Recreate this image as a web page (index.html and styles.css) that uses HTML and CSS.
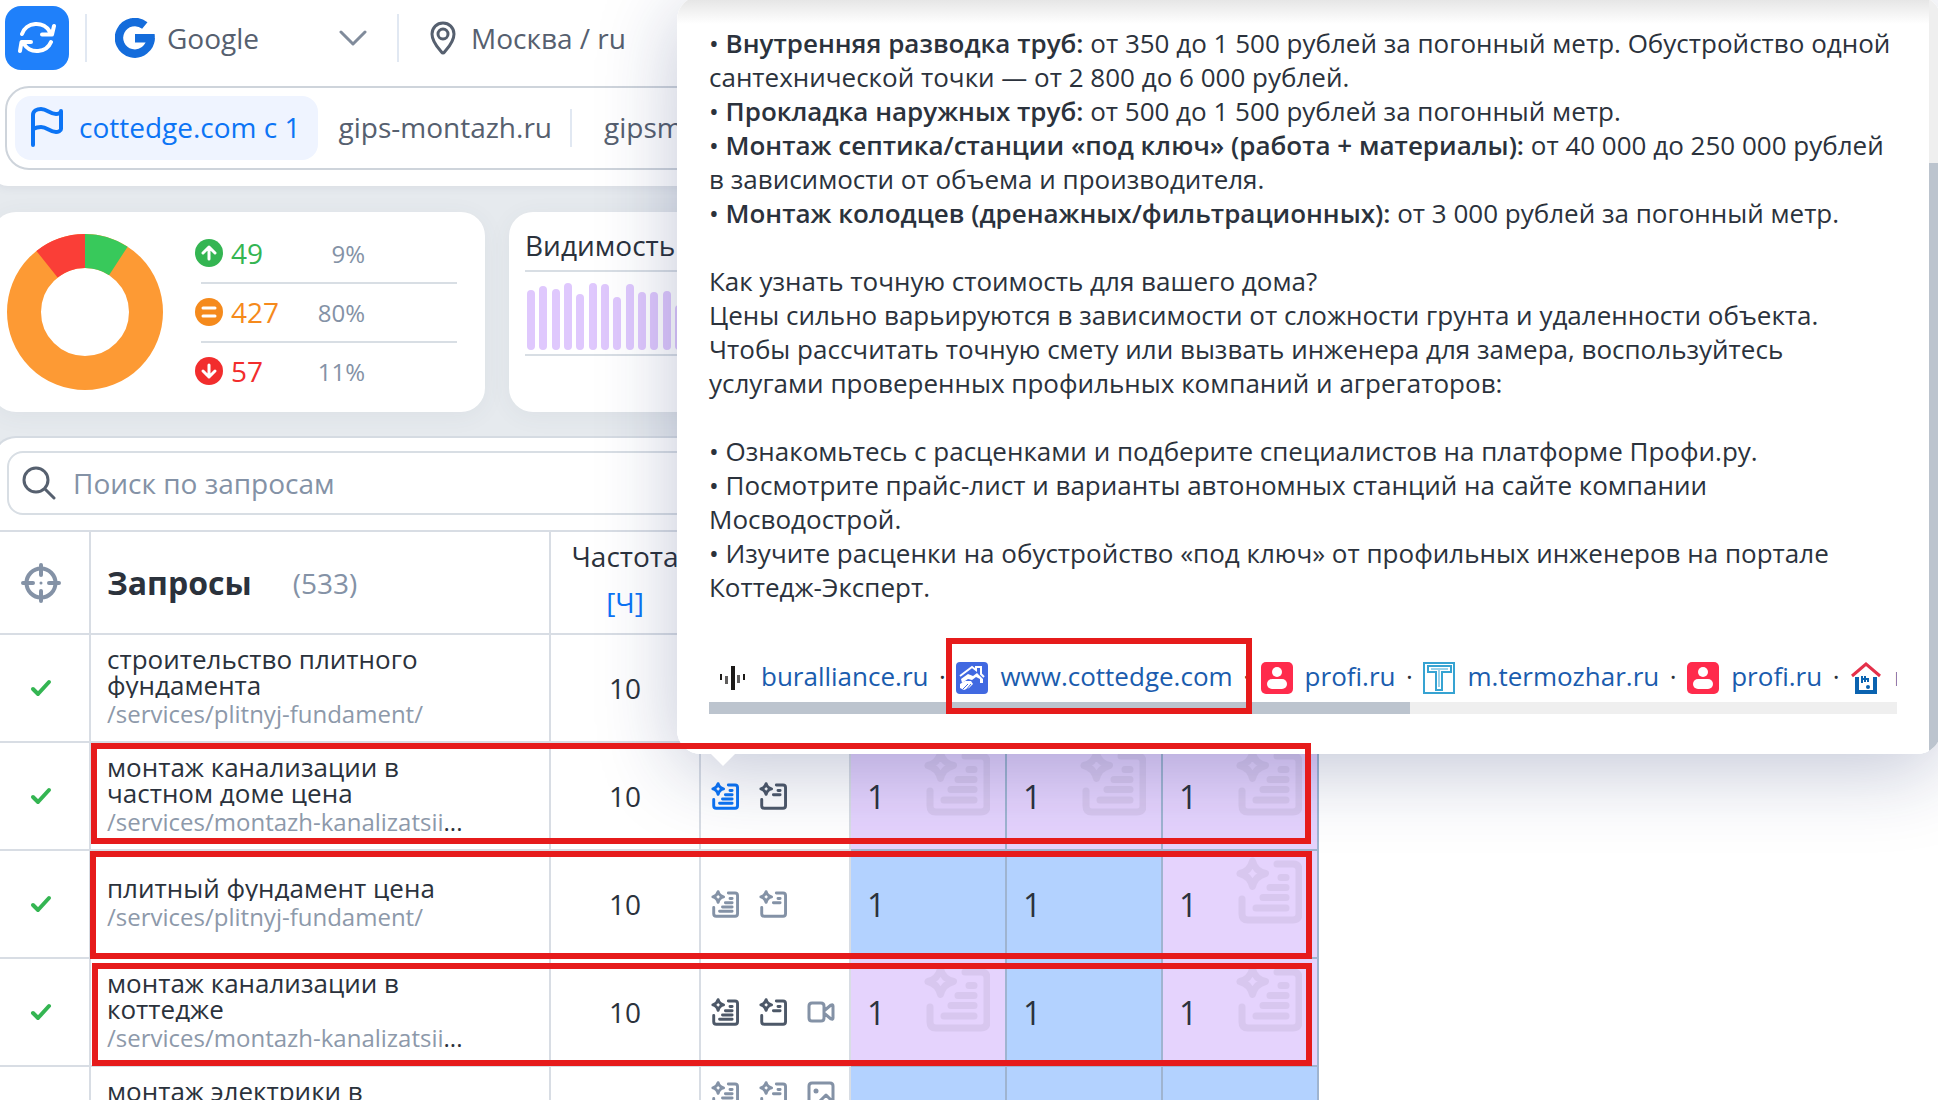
FILE: index.html
```html
<!DOCTYPE html>
<html lang="ru">
<head>
<meta charset="utf-8">
<title>Позиции сайта</title>
<link rel="stylesheet" href="styles.css">
</head>
<body>
<svg class="sprite" aria-hidden="true">
  <symbol id="i-full" viewBox="0 0 66 67">
    <path class="ln" d="M16.500 4Q19 14 29.500 16.500Q19 19 16.500 29.500Q14 19 4 16.500Q14 14 16.500 4ZM41 7H57q6 0 6 6V57q0 6-6 6H12q-6 0-6-6V42M45 20.500H50M34 30.500H50M27 40.500H50M20 51H50"/>
  </symbol>
  <symbol id="i-short" viewBox="0 0 66 67">
    <path class="ln" d="M16.500 4Q19 14 29.500 16.500Q19 19 16.500 29.500Q14 19 4 16.500Q14 14 16.500 4ZM41 7H57q6 0 6 6V57q0 6-6 6H12q-6 0-6-6V42M45 20.500H50M34 30.500H50"/>
  </symbol>
  <symbol id="i-video" viewBox="0 0 28 28">
    <path class="thin" d="M5 5H14q3 0 3 3V20q0 3-3 3H5q-3 0-3-3V8q0-3 3-3ZM18 12L24 7q2-1 2 1V20q0 2-2 1L18 16"/>
  </symbol>
  <symbol id="i-image" viewBox="0 0 28 28">
    <path class="thin" d="M5 2H23q3 0 3 3V23q0 3-3 3H5q-3 0-3-3V5q0-3 3-3ZM7 26L19 14l7 7"/><circle cx="9" cy="10" r="2.500" fill="currentColor"/>
  </symbol>
  <symbol id="i-check" viewBox="0 0 22 18">
    <path d="M3 10L8 15L19 3" fill="none" stroke="#34b552" stroke-width="4" stroke-linecap="round" stroke-linejoin="round"/>
  </symbol>
  <symbol id="i-person" viewBox="0 0 32 32">
    <rect width="32" height="32" rx="5" fill="#ff2b4c"/><circle cx="16" cy="10" r="5" fill="#fff"/><rect x="6" y="17" width="20" height="10" rx="5" fill="#fff"/>
  </symbol>
</svg>

<main class="page">
  <header class="panel top">
    <div class="toolbar">
      <button class="refresh" aria-label="Обновить">
        <svg width="38" height="34" viewBox="0 0 38 34"><path d="M4 13A15 14 0 0 1 32 11M36 5L34 13.500H24M33 21A15 14 0 0 1 6 23M2 30L3.500 21H13" fill="none" stroke="#fff" stroke-width="4" stroke-linecap="round" stroke-linejoin="round"/></svg>
      </button>
      <span class="rule"></span>
      <label class="engine">
        <svg width="40" height="40" viewBox="0 0 40 40"><path d="M29.800 7.600A15.800 15.800 0 1 0 35.600 20" fill="none" stroke="#146cdb" stroke-width="8.400"/><path d="M20 16H39.600Q40.400 21 38.500 26L31 24.500H20Z" fill="#146cdb"/></svg>
        <select aria-label="Поисковая система"><option>Google</option></select>
        <svg width="28" height="16" viewBox="0 0 28 16"><path d="M2 2L14 14L26 2" fill="none" stroke="#808b9b" stroke-width="3" stroke-linecap="round" stroke-linejoin="round"/></svg>
      </label>
      <span class="rule"></span>
      <button class="region">
        <svg width="26" height="34" viewBox="0 0 26 34"><path d="M13 2C7 2 2 6.500 2 13C2 21 9 28 11.500 31Q13 33 14.500 31C17 28 24 21 24 13C24 6.500 19 2 13 2Z" fill="none" stroke="#56606f" stroke-width="3"/><circle cx="13" cy="13" r="5" fill="none" stroke="#56606f" stroke-width="3"/></svg>
        Москва / ru
      </button>
    </div>
    <nav class="tabs">
      <button class="tab active">
        <svg width="32" height="40" viewBox="0 0 32 40"><path d="M2 38V8C2 4 6 2 10 2c6 0 9 5 15 5 2 0 5-1 5-3v18c0 2-3 3-5 3-6 0-9-5-15-5-4 0-6 1-8 2" fill="none" stroke="#0c74f5" stroke-width="4" stroke-linecap="round" stroke-linejoin="round"/></svg>
        cottedge.com с 1
      </button>
      <button class="tab">gips-montazh.ru</button>
      <span class="tab-rule"></span>
      <button class="tab last">gipsmontazh.ru</button>
    </nav>
  </header>

  <section class="cards">
    <article class="panel card summary">
      <svg width="156" height="156" viewBox="0 0 156 156">
        <g fill="none" stroke-width="34" transform="rotate(-90 78 78)">
          <circle cx="78" cy="78" r="61" stroke="#fd9a34"/>
          <circle cx="78" cy="78" r="61" stroke="#38c95b" pathLength="100" stroke-dasharray="9.200 90.800"/>
          <circle cx="78" cy="78" r="61" stroke="#fa3e37" pathLength="100" stroke-dasharray="10.700 89.300" stroke-dashoffset="-89.300"/>
        </g>
      </svg>
      <ul class="stats">
        <li class="up"><svg width="28" height="28" viewBox="0 0 28 28"><circle cx="14" cy="14" r="14" fill="currentColor"/><path d="M14 20V8M8 14L14 8L20 14"/></svg><span>49</span><small>9%</small></li>
        <li class="same"><svg width="28" height="28" viewBox="0 0 28 28"><circle cx="14" cy="14" r="14" fill="currentColor"/><path d="M8 10H20M8 18H20"/></svg><span>427</span><small>80%</small></li>
        <li class="down"><svg width="28" height="28" viewBox="0 0 28 28"><circle cx="14" cy="14" r="14" fill="currentColor"/><path d="M14 8V20M8 14L14 20L20 14"/></svg><span>57</span><small>11%</small></li>
      </ul>
    </article>
    <article class="panel card visibility">
      <h2>Видимость</h2>
      <div class="chart"><div class="bars">
        <i style="height:60px"></i><i style="height:64px"></i><i style="height:61px"></i><i style="height:67px"></i><i style="height:56px"></i><i style="height:67px"></i><i style="height:66px"></i><i style="height:53px"></i><i style="height:66px"></i><i style="height:58px"></i><i style="height:58px"></i><i style="height:59px"></i><i style="height:45px"></i>
      </div></div>
    </article>
  </section>

  <section class="panel queries">
    <label class="search">
      <svg width="34" height="34" viewBox="0 0 34 34"><g fill="none" stroke="#56606f" stroke-width="3" stroke-linecap="round"><circle cx="14" cy="14" r="12"/><path d="M23 23L32 32"/></g></svg>
      <input type="text" placeholder="Поиск по запросам" aria-label="Поиск по запросам">
    </label>
    <table>
      <colgroup><col class="c-mark"><col class="c-name"><col class="c-freq"><col class="c-icons"><col class="c-pos"><col class="c-pos"><col class="c-pos"></colgroup>
      <thead><tr>
        <th class="mid tick"><svg width="40" height="40" viewBox="0 0 40 40"><g fill="none" stroke="#8492a6" stroke-width="4" stroke-linecap="round"><circle cx="20" cy="20" r="14.500"/><path d="M20 2V12M20 28V38M2 20H12M28 20H38"/></g><circle cx="20" cy="20" r="1.500" fill="#8492a6"/></svg></th>
        <th class="name"><div class="title">Запросы <span>(533)</span></div></th>
        <th class="mid freq-head">Частота<br><a href="#freq">[Ч]</a></th>
        <th></th><th></th><th></th><th></th>
      </tr></thead>
      <tbody>
        <tr>
          <td class="mid tick"><svg width="22" height="18"><use href="#i-check"/></svg></td>
          <td class="name"><div class="query">строительство плитного фундамента</div><div class="url">/services/plitnyj-fundament/</div></td>
          <td class="mid">10</td><td></td><td class="blue"></td><td class="blue"></td><td class="blue"></td>
        </tr>
        <tr>
          <td class="mid tick"><svg width="22" height="18"><use href="#i-check"/></svg></td>
          <td class="name"><div class="query">монтаж канализации в частном доме цена</div><div class="url">/services/montazh-kanalizatsii<b>...</b></div></td>
          <td class="mid">10</td>
          <td><div class="icons"><svg class="on"><use href="#i-full"/></svg><svg class="dark"><use href="#i-short"/></svg></div></td>
          <td class="violet">1<svg class="mark"><use href="#i-full"/></svg></td>
          <td class="violet">1<svg class="mark"><use href="#i-full"/></svg></td>
          <td class="violet">1<svg class="mark"><use href="#i-full"/></svg></td>
        </tr>
        <tr>
          <td class="mid tick"><svg width="22" height="18"><use href="#i-check"/></svg></td>
          <td class="name"><div class="query">плитный фундамент цена</div><div class="url">/services/plitnyj-fundament/</div></td>
          <td class="mid">10</td>
          <td><div class="icons"><svg><use href="#i-full"/></svg><svg><use href="#i-short"/></svg></div></td>
          <td class="blue">1</td><td class="blue">1</td>
          <td class="violet">1<svg class="mark"><use href="#i-full"/></svg></td>
        </tr>
        <tr>
          <td class="mid tick"><svg width="22" height="18"><use href="#i-check"/></svg></td>
          <td class="name"><div class="query">монтаж канализации в коттедже</div><div class="url">/services/montazh-kanalizatsii<b>...</b></div></td>
          <td class="mid">10</td>
          <td><div class="icons"><svg class="dark"><use href="#i-full"/></svg><svg class="dark"><use href="#i-short"/></svg><svg><use href="#i-video"/></svg></div></td>
          <td class="violet">1<svg class="mark"><use href="#i-full"/></svg></td>
          <td class="blue">1</td>
          <td class="violet">1<svg class="mark"><use href="#i-full"/></svg></td>
        </tr>
        <tr>
          <td class="mid tick"></td>
          <td class="name"><div class="query">монтаж электрики в коттедже</div><div class="url">/services/</div></td>
          <td class="mid">10</td>
          <td class="upper"><div class="icons"><svg><use href="#i-full"/></svg><svg><use href="#i-short"/></svg><svg><use href="#i-image"/></svg></div></td>
          <td class="blue"></td><td class="blue"></td><td class="blue"></td>
        </tr>
      </tbody>
    </table>
  </section>
</main>

<aside class="popup">
  <div class="frame">
    <div class="answer">
      <p>• <b>Внутренняя разводка труб:</b> от 350 до 1 500 рублей за погонный метр. Обустройство одной сантехнической точки — от 2 800 до 6 000 рублей.<br>
      • <b>Прокладка наружных труб:</b> от 500 до 1 500 рублей за погонный метр.<br>
      • <b>Монтаж септика/станции «под ключ» (работа + материалы):</b> от 40 000 до 250 000 рублей в зависимости от объема и производителя.<br>
      • <b>Монтаж колодцев (дренажных/фильтрационных):</b> от 3 000 рублей за погонный метр.</p>
      <p>Как узнать точную стоимость для вашего дома?<br>
      Цены сильно варьируются в зависимости от сложности грунта и удаленности объекта. Чтобы рассчитать точную смету или вызвать инженера для замера, воспользуйтесь услугами проверенных профильных компаний и агрегаторов:</p>
      <p>• Ознакомьтесь с расценками и подберите специалистов на платформе Профи.ру.<br>
      • Посмотрите прайс-лист и варианты автономных станций на сайте компании Мосводострой.<br>
      • Изучите расценки на обустройство «под ключ» от профильных инженеров на портале Коттедж-Эксперт.</p>
      <div class="sources">
        <svg viewBox="0 0 32 32"><g fill="#1c1a18"><rect x="14" y="4" width="4" height="24"/><rect x="8" y="14" width="3" height="8" opacity=".7"/><rect x="20" y="13" width="3" height="8" opacity=".7"/><rect x="3" y="12" width="2" height="6"/><rect x="26" y="12" width="2" height="6"/></g></svg><a href="#s1">buralliance.ru</a><em>·</em>
        <svg viewBox="0 0 32 32"><rect width="32" height="32" rx="4" fill="#4169e1"/><path d="M4 14L16 5L20 8V5H25V12L28 15" fill="none" stroke="#fff" stroke-width="2"/><path d="M5 17L12 12L17 14L21 11L27 17V21H24V17L20 15L16 18L12 17L6 21Z" fill="#fff"/><path d="M4 22L9 19L15 19L17 22L13 26L8 28L4 26Z" fill="#fff"/><path d="M7 27L12 22M10 28L15 22" stroke="#4169e1"/></svg><a href="#s2">www.cottedge.com</a><em>·</em>
        <svg><use href="#i-person"/></svg><a href="#s3">profi.ru</a><em>·</em>
        <svg viewBox="0 0 32 32"><rect x="1" y="1" width="30" height="30" fill="#fff" stroke="#36a3d2" stroke-width="2"/><path d="M5 4H28V10H19V28H13V10H5Z" fill="none" stroke="#36a3d2" stroke-width="2"/><path d="M8 7H25M16 8V25" stroke="#36a3d2"/></svg><a href="#s4">m.termozhar.ru</a><em>·</em>
        <svg><use href="#i-person"/></svg><a href="#s5">profi.ru</a><em>·</em>
        <svg viewBox="0 0 32 32"><path d="M2 14L16 2L30 14" fill="none" stroke="#e4304a" stroke-width="3"/><path d="M7 15V30H25V15" fill="none" stroke="#0a63b0" stroke-width="4"/><path d="M12 14V21M15 14V20M18 16V20M11 17H19" stroke="#0a63b0" stroke-width="2"/><circle cx="18" cy="25" r="2" fill="#0a63b0"/></svg><a href="#s6">m</a>
      </div>
      <div class="hbar"><span></span></div>
    </div>
    <div class="vbar"><span></span></div>
  </div>
</aside>

<div class="outline o-source"></div>
<div class="outline o-first"></div>
<div class="outline o-second"></div>
<div class="outline o-third"></div>
</body>
</html>
```
FILE: styles.css
```css
* { box-sizing: border-box; }
html, body { height: 100%; }
body {
  position: relative;
  margin: 0;
  overflow: hidden;
  background: #e6eaee;
  color: #2b323c;
  font-family: "Open Sans", "Noto Sans", sans-serif;
  font-size: 28px;
}
button, select, input { font: inherit; color: inherit; background: none; border: 0; padding: 0; margin: 0; }
a { color: #0c74f5; text-decoration: none; }
svg { flex: none; display: block; }
.sprite { position: absolute; width: 0; height: 0; }
.ln { fill: none; stroke: currentColor; stroke-width: 7; stroke-linecap: round; stroke-linejoin: round; }
.thin { fill: none; stroke: currentColor; stroke-width: 3; stroke-linecap: round; stroke-linejoin: round; }

.page { margin-left: -8px; }
.panel { background: #fff; border-radius: 24px; }

/* Header */
.top { padding: 6px 12px 16px 13px; border-radius: 0 0 16px 16px; box-shadow: 0 2px 8px rgba(60, 80, 110, .08); color: #56606f; }
.toolbar { display: flex; align-items: center; height: 64px; }
.refresh { display: flex; align-items: center; justify-content: center; width: 64px; height: 64px; border-radius: 16px; background: #1f80fa; }
.rule { width: 2px; height: 48px; background: #e1e8f2; margin: 0 28px 0 16px; }
.engine { display: flex; align-items: center; }
.engine select { width: 172px; margin-left: 12px; appearance: none; }
.engine + .rule { margin: 0 31px 0 30px; }
.region { display: flex; align-items: center; gap: 15px; }
.tabs { display: flex; align-items: center; height: 84px; margin-top: 16px; padding: 8px; border: 2px solid #ced4db; border-radius: 24px; overflow: hidden; }
.tab { display: flex; align-items: center; gap: 16px; height: 64px; padding: 0 18px 2px 21px; white-space: nowrap; }
.tab.active { padding: 0 17px 2px 16px; border-radius: 16px; background: #eff4ff; color: #0c74f5; }
.tab-rule { width: 2px; height: 38px; background: #e1e8f2; }
.tab.last { padding-left: 32px; }

/* Cards */
.cards { display: flex; gap: 24px; margin: 26px 0 24px; }
.card { height: 200px; box-shadow: 0 4px 24px rgba(60, 80, 110, .06); }
.summary { display: flex; align-items: center; width: 493px; padding-left: 15px; }
.stats { width: 256px; margin: 0 0 0 38px; padding: 0; list-style: none; }
.stats li { display: flex; align-items: center; height: 59px; border-bottom: 2px solid #d8dee4; }
.stats li:last-child { height: 57px; border: 0; }
.stats svg { margin-left: -6px; margin-right: 8px; }
.stats path { fill: none; stroke: #fff; stroke-width: 3; stroke-linecap: round; stroke-linejoin: round; }
.stats span { width: 64px; }
.stats small { width: 70px; font-size: 24px; color: #8492a6; text-align: right; }
.up { color: #34b552; }
.same { color: #f58a1c; }
.down { color: #f22d2d; }
.visibility { flex: 1; padding: 14px 16px; }
.visibility h2 { margin: 0; padding-bottom: 6px; border-bottom: 2px solid #d8dee4; font-size: 28px; line-height: 38px; font-weight: 400; }
.chart { display: flex; align-items: flex-end; height: 84px; padding: 0 2px 4px; border-bottom: 2px solid #d8dee4; }
.bars { display: flex; align-items: flex-end; justify-content: space-between; width: 156px; }
.bars i { width: 8px; border-radius: 4px; background: #dfc8fd; }

/* Query table */
.queries { padding-top: 13px; border: 2px solid #d5dbe2; border-right: 0; border-radius: 24px 0 0 0; }
.search { display: flex; align-items: center; gap: 17px; height: 64px; margin: 0 13px 15px; padding: 0 13px; border: 2px solid #d8dee4; border-radius: 16px; }
.search input { flex: 1; outline: 0; }
.search input::placeholder { color: #8492a6; opacity: 1; }
table { width: 1325px; table-layout: fixed; border-collapse: separate; border-spacing: 0; border-top: 2px solid #d8dde4; }
.c-mark { width: 97px; }
.c-name { width: 460px; }
.c-freq, .c-icons { width: 150px; }
.c-pos { width: 156px; }
th, td { height: 108px; padding: 0 0 0 10px; border: 0 solid #d8dde4; border-width: 0 2px 2px 0; text-align: left; font-weight: 400; }
th { height: 103px; }
.mid { padding: 0; text-align: center; }
.mid svg { margin: 0 auto; }
.tick { padding-right: 2px; }
.name { padding-left: 16px; }
.title { display: flex; align-items: center; gap: 41px; font-size: 32px; font-weight: 700; }
.title span { font-size: 28px; font-weight: 400; color: #8492a6; }
.freq-head { padding-bottom: 7px; line-height: 46px; white-space: nowrap; }
.query { max-width: 340px; overflow: hidden; font-size: 26px; line-height: 26px; }
.url { font-size: 24px; line-height: 32px; color: #8d99aa; }
.url b { font-weight: 400; color: #2b323c; }
.icons { display: flex; gap: 20px; color: #8492a6; }
.icons svg { width: 28px; height: 28px; }
.icons .on { color: #0c74f5; }
.icons .dark { color: #4d5868; }
.upper { padding-top: 14px; vertical-align: top; }
.violet, .blue { position: relative; padding-left: 16px; border-color: #9fb4d0; font-size: 32px; }
.violet { background: #e5d3fd; }
.blue { background: #b3d2ff; }
.mark { position: absolute; top: 6px; right: 15px; width: 66px; height: 67px; color: #000; opacity: .05; }

/* Answer popup */
.popup { position: absolute; left: 677px; right: -3px; top: -4px; border-radius: 24px; box-shadow: 0 16px 80px rgba(22, 38, 99, .26); }
.popup::after { content: ""; position: absolute; left: 34px; top: 100%; border: 12px solid transparent; border-top-color: #fff; border-bottom: 0; }
.frame { display: flex; border-radius: 24px; overflow: hidden; background: #fff; }
.answer { flex: 1; min-width: 0; padding: 30px 32px 40px; font-size: 26px; line-height: 34px; background: linear-gradient(#e2e2e2, #fff 28px); }
.answer p { margin: 0 0 34px; }
.answer p:nth-of-type(3) { margin: 0; }
.answer p b { font-weight: 600; }
.sources { display: flex; align-items: center; height: 48px; margin-top: 50px; padding-left: 8px; overflow: hidden; white-space: nowrap; }
.sources svg { width: 32px; height: 32px; margin-right: 12px; }
.sources a, .sources em { padding-bottom: 5px; }
.sources a { color: #1a5cae; }
.sources em { flex: none; width: 28px; text-align: center; font-style: normal; }
.hbar { height: 12px; background: #efefef; }
.hbar span { display: block; width: 59%; height: 100%; background: #bcc4ce; }
.vbar { display: flex; width: 12px; background: #efefef; }
.vbar span { width: 100%; margin-top: 167px; background: #bcc4ce; }

/* Highlight frames */
.outline { position: absolute; border: 6px solid #e61b1b; pointer-events: none; }
.o-source { left: 946px; top: 638px; width: 306px; height: 76px; }
.o-first { left: 91px; top: 743px; width: 1220px; height: 101px; }
.o-second { left: 90px; top: 851px; width: 1222px; height: 108px; }
.o-third { left: 92px; top: 963px; width: 1220px; height: 103px; }
```
